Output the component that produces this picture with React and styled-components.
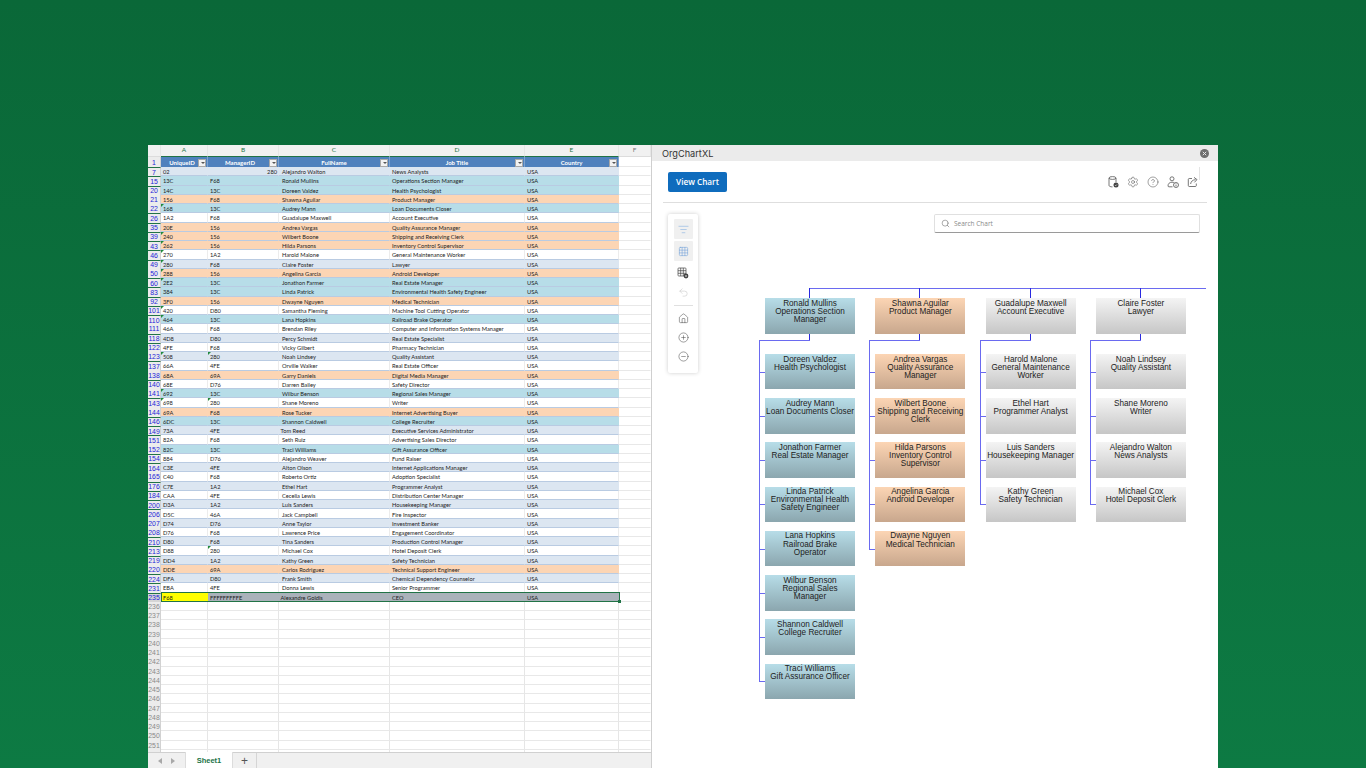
import React from 'react';
import styled, { createGlobalStyle, css } from 'styled-components';
import { CircleHelp, CircleMinus, CirclePlus, Grid3x3, Home, ListFilter, Search, Settings, Undo2 } from 'lucide-react';

const COLUMNS = '13px 47px 71px 111px 135px 94px 32px';

// num, uniqueId, managerId, name, title, tone, green marks
const rows = [
    [7, '02', '280', 'Alejandro Walton', 'News Analysts', 'light'],
    [15, '13C', 'F68', 'Ronald Mullins', 'Operations Section Manager', 'teal'],
    [20, '14C', '13C', 'Doreen Valdez', 'Health Psychologist', 'teal'],
    [21, '156', 'F68', 'Shawna Aguilar', 'Product Manager', 'peach'],
    [22, '168', '13C', 'Audrey Mann', 'Loan Documents Closer', 'teal', 'a'],
    [26, '1A2', 'F68', 'Guadalupe Maxwell', 'Account Executive', 'white'],
    [35, '20E', '156', 'Andrea Vargas', 'Quality Assurance Manager', 'peach'],
    [39, '240', '156', 'Wilbert Boone', 'Shipping and Receiving Clerk', 'peach', 'a'],
    [43, '262', '156', 'Hilda Parsons', 'Inventory Control Supervisor', 'peach', 'a'],
    [46, '270', '1A2', 'Harold Malone', 'General Maintenance Worker', 'white', 'a'],
    [49, '280', 'F68', 'Claire Foster', 'Lawyer', 'light', 'a'],
    [50, '288', '156', 'Angelina Garcia', 'Android Developer', 'peach', 'a'],
    [60, '2E2', '13C', 'Jonathon Farmer', 'Real Estate Manager', 'teal', 'a'],
    [83, '384', '13C', 'Linda Patrick', 'Environmental Health Safety Engineer', 'teal'],
    [92, '3F0', '156', 'Dwayne Nguyen', 'Medical Technician', 'peach'],
    [101, '420', 'D80', 'Samantha Fleming', 'Machine Tool Cutting Operator', 'white', 'a'],
    [110, '464', '13C', 'Lana Hopkins', 'Railroad Brake Operator', 'teal', 'a'],
    [111, '46A', 'F68', 'Brendan Riley', 'Computer and Information Systems Manager', 'white'],
    [118, '4D8', 'D80', 'Percy Schmidt', 'Real Estate Specialist', 'light'],
    [122, '4FE', 'F68', 'Vicky Gilbert', 'Pharmacy Technician', 'white'],
    [123, '508', '280', 'Noah Lindsey', 'Quality Assistant', 'light', 'ab'],
    [137, '66A', '4FE', 'Orville Walker', 'Real Estate Officer', 'white'],
    [138, '68A', '69A', 'Garry Daniels', 'Digital Media Manager', 'peach'],
    [140, '68E', 'D76', 'Darren Bailey', 'Safety Director', 'white'],
    [141, '692', '13C', 'Wilbur Benson', 'Regional Sales Manager', 'teal', 'a'],
    [143, '698', '280', 'Shane Moreno', 'Writer', 'white', 'ab'],
    [144, '69A', 'F68', 'Rose Tucker', 'Internet Advertising Buyer', 'peach'],
    [146, '6DC', '13C', 'Shannon Caldwell', 'College Recruiter', 'teal'],
    [149, '73A', '4FE', 'Tom Reed', 'Executive Services Administrator', 'light'],
    [151, '82A', 'F68', 'Seth Ruiz', 'Advertising Sales Director', 'white'],
    [152, '82C', '13C', 'Traci Williams', 'Gift Assurance Officer', 'teal'],
    [154, '884', 'D76', 'Alejandro Weaver', 'Fund Raiser', 'white'],
    [164, 'C3E', '4FE', 'Alton Olson', 'Internet Applications Manager', 'light'],
    [165, 'C40', 'F68', 'Roberto Ortiz', 'Adoption Specialist', 'white'],
    [176, 'C7E', '1A2', 'Ethel Hart', 'Programmer Analyst', 'light'],
    [184, 'CAA', '4FE', 'Cecelia Lewis', 'Distribution Center Manager', 'white'],
    [200, 'D3A', '1A2', 'Luis Sanders', 'Housekeeping Manager', 'light'],
    [206, 'D5C', '46A', 'Jack Campbell', 'Fire Inspector', 'white'],
    [207, 'D74', 'D76', 'Anne Taylor', 'Investment Banker', 'light'],
    [208, 'D76', 'F68', 'Lawrence Price', 'Engagement Coordinator', 'white'],
    [210, 'D80', 'F68', 'Tina Sanders', 'Production Control Manager', 'light'],
    [213, 'D88', '280', 'Michael Cox', 'Hotel Deposit Clerk', 'white', 'b'],
    [219, 'DD4', '1A2', 'Kathy Green', 'Safety Technician', 'light'],
    [220, 'DDE', '69A', 'Carlos Rodriguez', 'Technical Support Engineer', 'peach'],
    [224, 'DFA', 'D80', 'Frank Smith', 'Chemical Dependency Counselor', 'light'],
    [231, 'EBA', '4FE', 'Donna Lewis', 'Senior Programmer', 'white'],
];

const blankRows = Array.from({ length: 17 }, (_, i) => 236 + i);

const branches = [
    {
        tone: 'teal',
        lead: ['Ronald Mullins', 'Operations Section', 'Manager'],
        reports: [
            ['Doreen Valdez', 'Health Psychologist'],
            ['Audrey Mann', 'Loan Documents Closer'],
            ['Jonathon Farmer', 'Real Estate Manager'],
            ['Linda Patrick', 'Environmental Health', 'Safety Engineer'],
            ['Lana Hopkins', 'Railroad Brake', 'Operator'],
            ['Wilbur Benson', 'Regional Sales', 'Manager'],
            ['Shannon Caldwell', 'College Recruiter'],
            ['Traci Williams', 'Gift Assurance Officer'],
        ],
    },
    {
        tone: 'peach',
        lead: ['Shawna Aguilar', 'Product Manager'],
        reports: [
            ['Andrea Vargas', 'Quality Assurance', 'Manager'],
            ['Wilbert Boone', 'Shipping and Receiving', 'Clerk'],
            ['Hilda Parsons', 'Inventory Control', 'Supervisor'],
            ['Angelina Garcia', 'Android Developer'],
            ['Dwayne Nguyen', 'Medical Technician'],
        ],
    },
    {
        tone: 'grey',
        lead: ['Guadalupe Maxwell', 'Account Executive'],
        reports: [
            ['Harold Malone', 'General Maintenance', 'Worker'],
            ['Ethel Hart', 'Programmer Analyst'],
            ['Luis Sanders', 'Housekeeping Manager'],
            ['Kathy Green', 'Safety Technician'],
        ],
    },
    {
        tone: 'grey',
        lead: ['Claire Foster', 'Lawyer'],
        reports: [
            ['Noah Lindsey', 'Quality Assistant'],
            ['Shane Moreno', 'Writer'],
            ['Alejandro Walton', 'News Analysts'],
            ['Michael Cox', 'Hotel Deposit Clerk'],
        ],
    },
];

const Global = createGlobalStyle`
    html, body {
        margin: 0;
        height: 768px;
        overflow: hidden;
    }
`;

const Stage = styled.div`
    height: 768px;
    box-sizing: border-box;
    padding: 145px 148px 0;
    background: linear-gradient(180deg, #0a6838 0%, #0d7a43 100%);
`;

const Win = styled.div`
    display: flex;
    width: 1070px;
    height: 623px;
    background: #fff;
    overflow: hidden;
`;

/* Spreadsheet */
const Sheet = styled.div`
    width: 504px;
    flex-shrink: 0;
    display: flex;
    flex-direction: column;
    border-right: 1px solid #cfcfcf;
    box-sizing: border-box;
    font-family: Lato, "Liberation Sans", sans-serif;
    color: #1c1c1c;
`;

const Cells = styled.div`
    height: 607px;
    overflow: hidden;
`;

const Row = styled.div`
    position: relative;
    display: grid;
    grid-template-columns: ${COLUMNS};
    height: ${p => p.$height || '9.25px'};
    ${p => p.$selected && css`
        &::after {
            content: '';
            position: absolute;
            left: 13px;
            top: -1px;
            width: 459px;
            height: 10px;
            border: 1px solid #217346;
            box-sizing: border-box;
        }
        &::before {
            content: '';
            position: absolute;
            left: 470px;
            top: 7.5px;
            width: 3px;
            height: 3px;
            background: #217346;
            z-index: 1;
        }
    `}
`;

const ColLetter = styled.div`
    display: flex;
    align-items: center;
    justify-content: center;
    padding-bottom: 2px;
    box-sizing: border-box;
    background: #f1f1f1;
    border-right: 1px solid #e6e6e6;
    border-bottom: 1px solid ${p => p.$on ? '#217346' : '#dcdcdc'};
    font-size: 6.5px;
    color: ${p => p.$on ? '#217346' : '#777'};
`;

const RowHead = styled.div`
    display: flex;
    align-items: center;
    justify-content: center;
    background: ${p => p.$selected ? '#d5d5d5' : '#ececec'};
    border-right: 1px solid #d2d2d2;
    box-sizing: border-box;
    overflow: hidden;
    font-family: "Liberation Sans", sans-serif;
    font-size: 6.9px;
    line-height: 9px;
    color: ${p => p.$blank ? '#8a8a8a' : '#2424d8'};
    ${p => p.$jump && 'border-top: 1px solid #217346;'}
`;

const HeadCell = styled.div`
    position: relative;
    display: flex;
    align-items: center;
    justify-content: center;
    background: #4f81bd;
    border-right: 1px solid #7fa3cf;
    font-size: 6px;
    font-weight: 700;
    color: #fff;
    padding-right: ${p => p.$pad || 0}px;
`;

const FilterBtn = styled.span`
    position: absolute;
    right: 1px;
    top: 1.5px;
    width: 8px;
    height: 8px;
    background: #f2f2f2;
    border: 0.5px solid #a8a8a8;
    box-sizing: border-box;
    &::after {
        content: '';
        position: absolute;
        left: 1.5px;
        top: 2.5px;
        border-left: 2px solid transparent;
        border-right: 2px solid transparent;
        border-top: 2.5px solid #555;
    }
`;

const tones = {
    light: '#dce6f1',
    teal: '#b7dde8',
    peach: '#fcd5b4',
    white: '#ffffff',
    grey: '#aab2ba',
    yellow: '#ffff00',
};

const Cell = styled.div`
    position: relative;
    background: ${p => tones[p.$tone] || '#fff'};
    border-right: 1px solid ${p => p.$tone === 'white' ? '#ececec' : 'transparent'};
    border-bottom: 1px solid ${p => p.$tone && p.$tone !== 'grey' && p.$tone !== 'yellow' ? '#b9cbe2' : '#e4e4e4'};
    box-sizing: border-box;
    padding-left: ${p => p.$pad || 2}px;
    font-size: 5.7px;
    line-height: ${p => p.$clip ? '12px' : '10px'};
    white-space: nowrap;
    overflow: hidden;
    text-align: ${p => p.$right ? 'right' : 'left'};
    padding-right: ${p => p.$right ? 1 : 0}px;
    ${p => p.$mark && css`
        &::before {
            content: '';
            position: absolute;
            left: 0;
            top: 0;
            border-top: 3px solid #218a3c;
            border-right: 3px solid transparent;
        }
    `}
`;

const Blank = styled.div`
    border-right: 1px solid ${p => p.$strong ? '#e6e6e6' : 'transparent'};
    border-bottom: 1px solid #e8e8e8;
    box-sizing: border-box;
`;

const EdgeCell = styled(Blank)`
    border-left: 1px solid #b9cbe2;
    margin-left: -1px;
`;

const TabBar = styled.div`
    flex: 1;
    display: flex;
    align-items: stretch;
    background: #f0f0f0;
    border-top: 1px solid #d0d0d0;
`;

const TabNav = styled.div`
    width: 37px;
    display: flex;
    align-items: center;
    justify-content: center;
    gap: 9px;
    padding-top: 1px;
    box-sizing: border-box;
`;

const Arrow = styled.span`
    width: 0;
    height: 0;
    border-top: 3px solid transparent;
    border-bottom: 3px solid transparent;
    ${p => p.$dir === 'left' ? 'border-right' : 'border-left'}: 4px solid #a8a8a8;
`;

const Tab = styled.div`
    width: 48px;
    margin-top: -1px;
    display: flex;
    align-items: center;
    justify-content: center;
    background: #fff;
    border-left: 1px solid #dcdcdc;
    border-right: 1px solid #dcdcdc;
    box-sizing: border-box;
    font-family: "Liberation Sans", sans-serif;
    font-size: 7.5px;
    font-weight: 700;
    color: #217346;
`;

const AddTab = styled.div`
    width: 24px;
    display: flex;
    align-items: center;
    justify-content: center;
    border-right: 1px solid #d5d5d5;
    box-sizing: border-box;
    font-family: "Liberation Sans", sans-serif;
    font-size: 12px;
    line-height: 1;
    color: #555;
`;

/* OrgChart task pane */
const Panel = styled.div`
    flex: 1;
    display: flex;
    flex-direction: column;
    font-family: "Liberation Sans", sans-serif;
`;

const TitleBar = styled.div`
    height: 16px;
    display: flex;
    align-items: center;
    justify-content: space-between;
    padding: 0 9px 0 10px;
    background: #ebebeb;
    font-family: Inter, "Liberation Sans", sans-serif;
    font-size: 9.2px;
    color: #333;
`;

const Head = styled.div`
    position: relative;
    display: flex;
    align-items: center;
    justify-content: space-between;
    margin: 0 11px;
    height: 41px;
    padding: 0 8px 0 5px;
    border-bottom: 1px solid #dedede;
    &::after {
        content: '';
        position: absolute;
        right: 7px;
        top: 6px;
        width: 1px;
        height: 13px;
        background: #e4e4e4;
    }
`;

const ViewBtn = styled.button`
    width: 59px;
    height: 20px;
    padding: 0;
    border: none;
    border-radius: 2px;
    background: #0f6cbd;
    color: #fff;
    font-family: "Open Sans", "Liberation Sans", sans-serif;
    font-size: 8.2px;
    font-weight: 600;
`;

const HeadIcons = styled.div`
    display: flex;
    align-items: center;
    gap: 8px;
    color: #555;
`;

const Body = styled.div`
    flex: 1;
    display: flex;
    align-items: flex-start;
    padding: 11px 0 0 16px;
`;

const Rail = styled.div`
    width: 30px;
    height: 159px;
    flex-shrink: 0;
    display: flex;
    flex-direction: column;
    align-items: center;
    padding-top: 5px;
    box-sizing: border-box;
    background: #fff;
    border-radius: 2px;
    box-shadow: 0 0 4px rgba(0, 0, 0, 0.2);
`;

const RailBtn = styled.div`
    width: 19px;
    height: ${p => p.$height || 20}px;
    margin-bottom: ${p => p.$gap || 0}px;
    display: flex;
    align-items: center;
    justify-content: center;
    background: ${p => p.$on ? '#f0f0f0' : 'transparent'};
    border-radius: 1px;
    color: ${p => p.$color || '#444'};
`;

const RailRule = styled.div`
    width: 19px;
    height: 1px;
    margin: 4.5px 0 3px;
    background: #e0e0e0;
`;

const Canvas = styled.div`
    flex: 1;
    display: flex;
    flex-direction: column;
`;

const SearchBox = styled.div`
    align-self: flex-end;
    width: 266px;
    height: 19px;
    margin-right: 18px;
    display: flex;
    align-items: center;
    gap: 4px;
    padding-left: 6px;
    box-sizing: border-box;
    border: 1px solid #e0e0e0;
    border-bottom-color: #9a9a9a;
    border-radius: 2px;
    font-family: "Open Sans", "Liberation Sans", sans-serif;
    font-size: 6.5px;
    color: #8a8a8a;
`;

const Tree = styled.div`
    position: relative;
    display: flex;
    gap: 20.3px;
    margin: 55px 0 0 67px;
    &::before {
        content: '';
        position: absolute;
        left: 44px;
        top: 0;
        width: 397px;
        height: 1px;
        background: #6a6af0;
    }
`;

const Branch = styled.div`
    position: relative;
    width: 90px;
    padding-top: 10px;
    &::before {
        content: '';
        position: absolute;
        left: 44px;
        top: 0;
        width: 1px;
        height: 10px;
        background: #2a2ae0;
    }
`;

const nodeTones = {
    teal: 'linear-gradient(180deg, #b7dde8 0%, #8ba6ae 100%)',
    peach: 'linear-gradient(180deg, #fcd5b4 0%, #c8a78d 100%)',
    grey: 'linear-gradient(180deg, #f4f4f4 0%, #c6c6c6 100%)',
};

const Node = styled.div`
    position: relative;
    height: ${p => p.$lead ? 36 : 35.4}px;
    padding-top: 1.5px;
    box-sizing: border-box;
    background: ${p => nodeTones[p.$tone]};
    text-align: center;
    font-size: 8.2px;
    line-height: 8.1px;
    color: #222;
    white-space: nowrap;
`;

const Lead = styled(Node)`
    margin-bottom: 20px;
    &::after {
        content: '';
        position: absolute;
        left: 44px;
        top: 100%;
        width: 1px;
        height: 6px;
        background: #2a2ae0;
    }
`;

const Reports = styled.div`
    position: relative;
    display: flex;
    flex-direction: column;
    gap: 8.85px;
    &::before {
        content: '';
        position: absolute;
        left: -6px;
        top: -14px;
        width: 51px;
        height: 1px;
        background: #6a6af0;
    }
`;

const Report = styled(Node)`
    &::before {
        content: '';
        position: absolute;
        left: -6px;
        top: 50%;
        width: 6px;
        height: 1px;
        background: #6a6af0;
    }
    &::after {
        content: '';
        position: absolute;
        left: -6px;
        bottom: 50%;
        width: 1px;
        height: ${p => p.$first ? '32px' : '44px'};
        background: #6a6af0;
    }
`;

const CloseIcon = () => (
    <svg width="9" height="9" viewBox="0 0 9 9">
        <circle cx="4.5" cy="4.5" r="4.5" fill="#6e6e6e" />
        <path d="M2.8 2.8l3.4 3.4M6.2 2.8L2.8 6.2" stroke="#e8e8e8" strokeWidth="1" />
    </svg>
);

const DbIcon = () => (
    <svg width="11" height="12" viewBox="0 0 11 12" fill="none" stroke="#555" strokeWidth="0.8">
        <ellipse cx="4.5" cy="2" rx="3.5" ry="1.4" />
        <path d="M1 2v7.5c0 .8 1.6 1.4 3.5 1.4M8 2v4" />
        <circle cx="8" cy="9" r="2.5" fill="#444" stroke="none" />
        <path d="M6.9 9l.8.8 1.4-1.4" stroke="#fff" strokeWidth="0.6" />
    </svg>
);

const PeopleIcon = () => (
    <svg width="12" height="12" viewBox="0 0 12 12" fill="none" stroke="#555" strokeWidth="0.8">
        <circle cx="5" cy="2.8" r="2" />
        <path d="M1 10c0-2.4 1.6-3.8 4-3.8 1 0 1.7.2 2.3.6M1 10c0 .5.4.8 1 .8h3.5" />
        <circle cx="9" cy="9" r="2.5" />
        <path d="M9 8.6v1.8M9 7.5v.5" />
    </svg>
);

const ShareIcon = () => (
    <svg width="12" height="12" viewBox="0 0 12 12" fill="none" stroke="#555" strokeWidth="0.8">
        <path d="M5 2.5H2.2c-.5 0-.9.4-.9.9v6.2c0 .5.4.9.9.9h6.2c.5 0 .9-.4.9-.9V7.5" />
        <path d="M3.6 8c.3-2.6 2.2-4.3 5-4.3M7 1.4l3 2.2-2.6 2.8" />
    </svg>
);

const TableCogIcon = () => (
    <svg width="12" height="12" viewBox="0 0 12 12" fill="none" stroke="#444" strokeWidth="0.7">
        <rect x="1" y="1" width="8" height="8" rx="0.8" />
        <path d="M1 3.7h8M1 6.3h8M3.7 1v8M6.3 1v8" />
        <circle cx="9" cy="9" r="2.4" fill="#444" stroke="none" />
        <circle cx="9" cy="9" r="0.8" fill="#fff" stroke="none" />
    </svg>
);

const Spreadsheet = () => {
    const cols = ['A', 'B', 'C', 'D', 'E', 'F'];
    return (
        <Sheet>
            <Cells>
                <Row $height="12px">
                    <ColLetter />
                    {cols.map(c => <ColLetter key={c} $on={c !== 'F'}>{c}</ColLetter>)}
                </Row>
                <Row $height="10px">
                    <RowHead>1</RowHead>
                    <HeadCell $pad={4}>UniqueID<FilterBtn /></HeadCell>
                    <HeadCell $pad={6}>ManagerID<FilterBtn /></HeadCell>
                    <HeadCell>FullName<FilterBtn /></HeadCell>
                    <HeadCell>Job Title<FilterBtn /></HeadCell>
                    <HeadCell>Country<FilterBtn /></HeadCell>
                    <Blank />
                </Row>
                {rows.map(([num, a, b, name, title, tone, marks = ''], i) => {
                    const prev = i === 0 ? 1 : rows[i - 1][0];
                    const clip = num === 206;
                    return (
                        <Row key={num}>
                            <RowHead $jump={num !== prev + 1}>{num}</RowHead>
                            <Cell $tone={tone} $clip={clip} $mark={marks.includes('a')}>{a}</Cell>
                            <Cell $tone={tone} $clip={clip} $mark={marks.includes('b')} $right={num === 7}>{b}</Cell>
                            <Cell $tone={tone} $clip={clip} $pad={num === 149 ? 1.5 : 3}>{name}</Cell>
                            <Cell $tone={tone} $clip={clip}>{title}</Cell>
                            <Cell $tone={tone} $clip={clip}>USA</Cell>
                            <EdgeCell />
                        </Row>
                    );
                })}
                <Row $selected>
                    <RowHead $jump $selected>235</RowHead>
                    <Cell $tone="yellow">F68</Cell>
                    <Cell $tone="grey">FFFFFFFFFE</Cell>
                    <Cell $tone="grey" $pad={1.5}>Alexandre Goldis</Cell>
                    <Cell $tone="grey">CEO</Cell>
                    <Cell $tone="grey">USA</Cell>
                    <Blank />
                </Row>
                {blankRows.map(num => (
                    <Row key={num}>
                        <RowHead $blank>{num}</RowHead>
                        <Blank $strong />
                        <Blank $strong />
                        <Blank $strong />
                        <Blank $strong />
                        <Blank $strong />
                        <Blank />
                    </Row>
                ))}
            </Cells>
            <TabBar>
                <TabNav>
                    <Arrow $dir="left" />
                    <Arrow $dir="right" />
                </TabNav>
                <Tab>Sheet1</Tab>
                <AddTab>+</AddTab>
            </TabBar>
        </Sheet>
    );
};

const Lines = ({ lines }) => lines.map(line => <div key={line}>{line}</div>);

const OrgTree = () => (
    <Tree>
        {branches.map(branch => (
            <Branch key={branch.lead[0]}>
                <Lead $lead $tone={branch.tone}><Lines lines={branch.lead} /></Lead>
                <Reports>
                    {branch.reports.map((lines, i) => (
                        <Report key={lines[0]} $tone={branch.tone} $first={i === 0}>
                            <Lines lines={lines} />
                        </Report>
                    ))}
                </Reports>
            </Branch>
        ))}
    </Tree>
);

const TaskPane = () => (
    <Panel>
        <TitleBar>
            <span>OrgChartXL</span>
            <CloseIcon />
        </TitleBar>
        <Head>
            <ViewBtn>View Chart</ViewBtn>
            <HeadIcons>
                <DbIcon />
                <Settings size={12} strokeWidth={1.1} />
                <CircleHelp size={12} strokeWidth={1.1} />
                <PeopleIcon />
                <ShareIcon />
            </HeadIcons>
        </Head>
        <Body>
            <Rail>
                <RailBtn $on $gap={2} $color="#8db4e2"><ListFilter size={11} strokeWidth={1.4} /></RailBtn>
                <RailBtn $on $color="#6f9fd8"><Grid3x3 size={11} strokeWidth={1.2} /></RailBtn>
                <RailBtn $height={24}><TableCogIcon /></RailBtn>
                <RailBtn $height={15} $color="#c4c4c4"><Undo2 size={11} strokeWidth={1.2} /></RailBtn>
                <RailRule />
                <RailBtn $height={19}><Home size={11} strokeWidth={1.1} /></RailBtn>
                <RailBtn $height={19}><CirclePlus size={11} strokeWidth={1.1} /></RailBtn>
                <RailBtn><CircleMinus size={11} strokeWidth={1.1} /></RailBtn>
            </Rail>
            <Canvas>
                <SearchBox>
                    <Search size={9} strokeWidth={1.3} color="#555" />
                    Search Chart
                </SearchBox>
                <OrgTree />
            </Canvas>
        </Body>
    </Panel>
);

export default function App() {
    return (
        <Stage>
            <Global />
            <Win>
                <Spreadsheet />
                <TaskPane />
            </Win>
        </Stage>
    );
}
